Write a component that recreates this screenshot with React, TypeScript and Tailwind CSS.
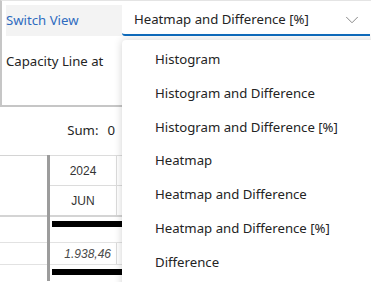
import { ChevronDown } from 'lucide-react'

const options = [
  'Histogram',
  'Histogram and Difference',
  'Histogram and Difference [%]',
  'Heatmap',
  'Heatmap and Difference',
  'Heatmap and Difference [%]',
  'Difference',
]

export default function App() {
  return (
    <div
      className="relative w-[371px] h-[282px] overflow-hidden bg-white text-[14px] text-[#242424]"
      style={{ fontFamily: '"Noto Sans", "Open Sans", sans-serif' }}
    >
      {/* settings panel */}
      <div className="h-[107px] w-[400px] border-l-2 border-b-2 border-t border-l-[#c6c6c6] border-b-[#c6c6c6] border-t-[#e4e4e4] pl-[4px] pt-[4px] text-[13.2px]">
        <div className="flex h-[31px]">
          <div className="w-[116px] bg-[#f3f3f3] text-[#2f6bc0] flex items-center pt-[1px]">Switch View</div>
          <div className="w-[248px] flex items-center justify-between pl-[12px] pr-[7px] border-b-2 border-[#0f6cbd] rounded-bl-[3px]">
            <span>Heatmap and Difference [%]</span>
            <ChevronDown className="w-[22px] h-[22px] text-[#707070]" strokeWidth={0.9} />
          </div>
        </div>
        <div className="h-[52px] flex items-center">Capacity Line at</div>
      </div>

      {/* sum */}
      <div className="h-[48px] w-[118px] flex items-center justify-end pr-[3px] gap-[9px] text-[13.2px]">
        <span>Sum:</span>
        <span>0</span>
      </div>

      {/* table */}
      <div className="flex text-[12px] text-[#333]" style={{ fontFamily: '"Liberation Sans", Arial, sans-serif' }}>
        <div className="w-[47px]">
          <div className="h-[62px] border-t border-b-2 border-[#d4d4d4]" />
          <div className="h-[26px] border-b border-[#e2e2e2]" />
          <div className="h-[22px] border-b border-[#e2e2e2]" />
        </div>
        <div className="w-[3px] h-[126px] bg-[#9c9c9c]" />
        <div className="w-[80px]">
          <div className="h-[31px] border-t border-b border-[#dcdcdc] flex">
            <div className="w-[67px] border-r border-[#dcdcdc] flex items-center justify-center">2024</div>
          </div>
          <div className="h-[31px] border-b-2 border-[#d4d4d4] flex">
            <div className="w-[67px] border-r border-[#dcdcdc] flex items-center justify-center">JUN</div>
          </div>
          <div className="h-[26px] pt-[4px] border-b border-[#e2e2e2]">
            <div className="h-[6px] ml-[2px] bg-black" />
          </div>
          <div className="h-[22px] border-b border-[#e2e2e2] flex">
            <div className="w-[67px] border-r border-[#dcdcdc] flex items-center justify-end pr-[5px] italic text-[#4a4a4a]">1.938,46</div>
          </div>
          <div className="pt-[4px]">
            <div className="h-[6px] ml-[2px] bg-black" />
          </div>
        </div>
      </div>

      {/* dropdown listbox */}
      <div className="absolute left-[122px] top-[40px] w-[260px] h-[260px] bg-white rounded-[4px] pt-[3px] text-[13.2px] shadow-[0_0_8px_rgba(0,0,0,0.18)]">
        {options.map((o) => (
          <div key={o} className="h-[33.8px] flex items-center pl-[33px] text-[#242424]">
            {o}
          </div>
        ))}
      </div>
    </div>
  )
}
